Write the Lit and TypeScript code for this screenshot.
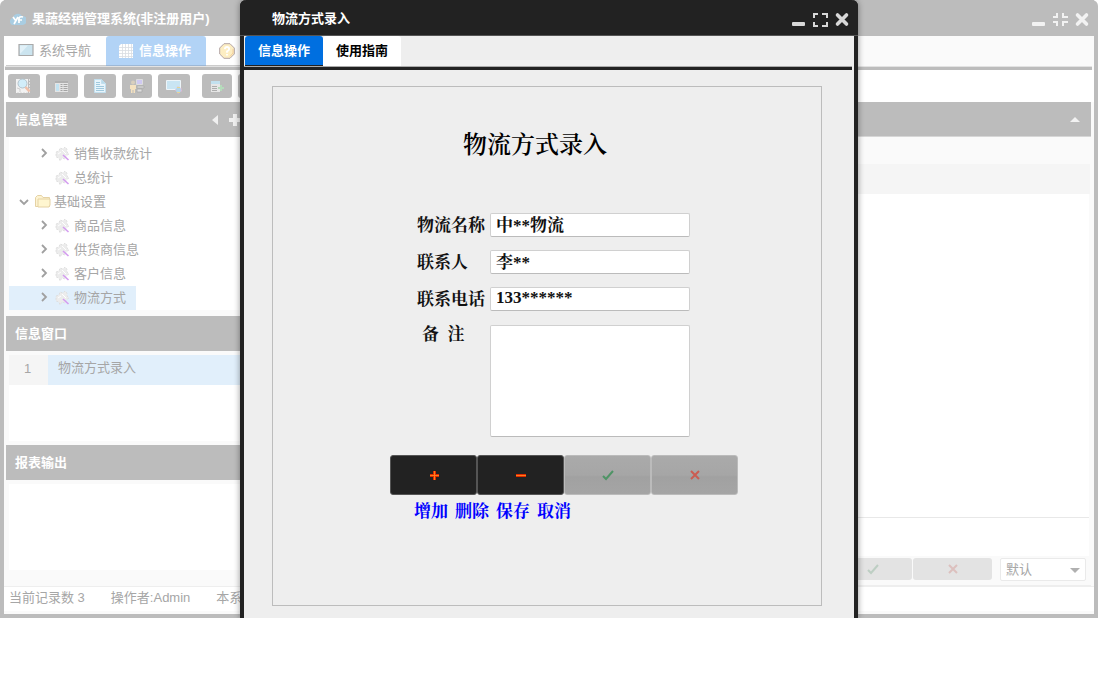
import { LitElement, html, css, svg } from "lit";
import { customElement } from "lit/decorators.js";
import { classMap } from "lit/directives/class-map.js";

const icons: Record<string, unknown> = {
  search: svg`<path d="M0 1h12v14H0z" fill="#f2f2f2"/><path d="M13.500 1v14M1 14.500h13" stroke="#e4e4e4" stroke-dasharray="2 1"/><path d="M1 10l3 1v3" fill="none" stroke="#cfcfcf"/><circle cx="6.500" cy="5.500" r="4.500" fill="#d2edf9" stroke="#b3c3cc"/><path d="M9.500 9l4 4.500" stroke="#efbfa9" stroke-width="2.600"/>`,
  form: svg`<path d="M1 3h13v11H1z" fill="#e4e4e4"/><path d="M1 3h13v2H1z" fill="#b0b0b0"/><path d="M2 6h3v7H2z" fill="#c2e3f2"/><path d="M6.500 6.500h2M6.500 8.500h2M6.500 10.500h2M6.500 12.500h2M9.500 6.500h4M9.500 8.500h4M9.500 10.500h4M9.500 12.500h4" stroke="#a4a4a4"/>`,
  page: svg`<path d="M2.500 1.500h7l4 4v9h-11z" fill="#e8f5fc" stroke="#c2dfee"/><path d="M9.500 1.500v4h4" fill="#b9dcec" stroke="#c2dfee"/><path d="M4 4.500h4M4 6.500h4M4 8.500h8M4 10.500h8M4 12.500h8" stroke="#9fc9de"/>`,
  user: svg`<path d="M7.500 1.500h6v5h-6z" fill="#cfc9f2" stroke="#ddd"/><path d="M8 8h7v2H8zM8 11h5v3H8z" fill="#dedede" stroke="#a8a8a8" stroke-width=".8"/><circle cx="4" cy="4.500" r="2" fill="#d9cfbd"/><path d="M1 7h6v4H6v4H4.500v-3H3.500v3H2v-4H1z" fill="#f5e2c0"/>`,
  screen: svg`<path d="M.500 2.500h14v9H.500z" fill="#c9e5f3" stroke="#edf5f9"/><circle cx="12.500" cy="12" r="2.600" fill="#b4d6ea"/><circle cx="12.500" cy="12" r="3" fill="none" stroke="#e0b8d8" stroke-dasharray="2 2"/><path d="M11 9.500h3M11 14.500h3" stroke="#e5d596"/>`,
  add: svg`<path d="M2 3h9v11H2z" fill="#e6e6e6"/><path d="M2 3h9v3H2z" fill="#c2e0ee"/><path d="M3 8.500h5M3 10.500h5M3 12.500h5" stroke="#adadad"/><path d="M12 7v6M9 10h6" stroke="#b5dcbb" stroke-width="2"/>`,
  monitor: svg`<path d="M1 1.500h14v11H1z" fill="#cbe4ef" stroke="#a9a9a9" stroke-width="1.200"/><path d="M2 2.500h8L2 11z" fill="#e2f1f8"/>`,
  gridIcon: svg`<path d="M3 1h12v14H1V3z" fill="#fff"/><path d="M4.500 1v14M7.500 1v14M10.500 1v14M13.500 1v14M1 4.500h14M1 7.500h14M1 10.500h14M1 13.500h14" stroke="#d9dde2" stroke-width=".8"/>`,
  help: svg`<path d="M5 .700h6l4.300 4.300v6L11 15.300H5L.700 11V5z" fill="#fdeec3" stroke="#b3a4a4"/><path d="M11 13.500L14 10V6" fill="none" stroke="#f4cf9a"/><path d="M5.800 6.200Q6 4 8 4t2.200 2Q10.200 7.500 8 8.400V9.800M8 11v1.500" fill="none" stroke="#fff" stroke-width="1.800"/>`,
  tool: svg`<path d="M1 6l3-1 1-3 3 1 2-2 2 2v3l2 2-3 2-1 3-3-1-2 3-1-3-3-1z" fill="#ececec" stroke="#dadada" stroke-dasharray="2 1.500" stroke-width=".8"/><path d="M3 8l3-2M7 4l4 4" stroke="#fff"/><path d="M8 9l5.500 5" stroke="#d49cf0" stroke-width="1.600"/>`,
  folder: svg`<path d="M.500 12.500v-9l2-2h4l1.500 2h6.500v9z" fill="#fdf3d2" stroke="#e5d2a4"/><path d="M3 12V5h12v6l-1 2H3z" fill="#fff6d0" stroke="#e5d2a4"/>`,
  logo: svg`<path d="M4 14a3.500 3.500 0 0 1-1-7 5 5 0 0 1 9-2 4 4 0 0 1 1 9z" fill="#a9cde2"/><path d="M3 6l3 4M8 6l-4 7M9 12V8q0-3 4-2M8 9h4" stroke="#fff" stroke-width="1.700" fill="none"/>`,
  min: svg`<rect x="2" y="11" width="13" height="4" rx="1"/>`,
  max: svg`<path d="M1 2h5v2H3v3H1zM10 2h6v5h-2V4h-4zM1 11h2v3h3v2H1zM14 11h2v5h-6v-2h4z"/>`,
  restore: svg`<path d="M4 2h2v5H1V5h3zM10 2h2v3h4v2h-6zM1 10h5v5H4v-3H1zM10 10h6v2h-4v3h-2z"/>`,
  close: svg`<path d="M3.500 4l9 9M12.500 4l-9 9" stroke="currentColor" stroke-width="3.600" stroke-linecap="round"/>`,
  right: svg`<path d="M6 3l4 4-4 4" fill="none" stroke="#a0a0a0" stroke-width="1.800"/>`,
  down: svg`<path d="M4 6l4 4 4-4" fill="none" stroke="#a0a0a0" stroke-width="1.800"/>`,
  left: svg`<path d="M11 3v10L5 8z"/>`,
  plusWhite: svg`<path d="M6 2h4v4h4v4h-4v4H6v-4H2V6h4z"/>`,
  up: svg`<path d="M3 11h10L8 6z"/>`,
  arrow: svg`<path d="M3 6h10l-5 5z" fill="#b0b0b0"/>`,
  plus: svg`<path d="M8.500 4v9M4 8.500h9" stroke="#e02a00" stroke-width="3"/><path d="M8.500 4v9M4 8.500h9" stroke="#ff7e1a"/>`,
  minus: svg`<path d="M3 8.500h10" stroke="#e02a00" stroke-width="3"/><path d="M3 8.500h10" stroke="#ff7e1a"/>`,
  check: svg`<path d="M3 9l3 3 7-8" fill="none" stroke="#4f9466" stroke-width="2"/>`,
  cross: svg`<path d="M4 4l8 8M12 4l-8 8" stroke="#cb5d52" stroke-width="2"/>`,
};

const icon = (name: string) =>
  html`<svg class="icon" viewBox="0 0 16 16" fill="currentColor" aria-hidden="true">${icons[name]}</svg>`;

const base = css`
  *, *::before, *::after { box-sizing: border-box; }
  button, input, textarea, select { font: inherit; color: inherit; margin: 0; padding: 0; border: 0; background: none; }
  .icon { width: 16px; height: 16px; display: block; flex: none; }
  .bar { display: flex; align-items: center; height: 36px; padding: 2px 4px 0 12px; }
  .bar-title { flex: 1; margin: 0; font-size: 13px; line-height: 20px; font-weight: 700; color: #fff; }
  .controls { display: flex; gap: 6px; }
  .tabs { display: flex; height: 30px; }
  .tab { display: flex; align-items: center; justify-content: center; gap: 5px; border-radius: 3px 3px 0 0; background: #fff; }
`;

@customElement("logistics-dialog")
export class LogisticsDialog extends LitElement {
  static styles = [
    base,
    css`
      :host { display: flex; flex-direction: column; background: #eee; border: solid #222; border-width: 0 4px; border-radius: 6px 6px 0 0; box-shadow: 0 0 6px rgba(0, 0, 0, 0.4); clip-path: inset(0 -10px 0 -10px); }
      .bar { background: #222; margin: 0 -4px; padding-left: 32px; padding-right: 8px; border-radius: 6px 6px 0 0; color: #d8d8d8; border-bottom: 1px solid #555; }
      .tab { width: 78px; font-weight: 700; color: #000; }
      .tab.active { background: #006fe0; color: #fff; border-bottom: 1px solid #222; }
      .tabs { padding-left: 1px; }
      .rule { height: 4px; margin-right: 2px; background: #222; border-top: 1px solid #aaa; }
      .sheet { flex: 1; margin: 16px 32px 12px 28px; border: 1px solid #bcbcbc; font-family: "Liberation Serif", "Noto Serif CJK SC", "Noto Sans CJK SC", serif; }
      .title { margin: 0; padding: 42px 24px 0 0; font-size: 24px; line-height: 32px; font-weight: 600; text-align: center; color: #000; }
      .form { width: 382px; margin: 52px auto 0; padding-left: 34px; font-size: 17px; font-weight: 700; color: #111; }
      .fields { display: grid; grid-template-columns: 67px 200px; gap: 13px 6px; padding-left: 27px; }
      .fields label { height: 24px; line-height: 26px; white-space: nowrap; }
      .fields .note { padding-left: 5px; line-height: 22px; }
      .box { width: 100%; height: 24px; padding: 0 6px 3px 5px; background: #fff; border: 1px solid #d0d0d0; border-radius: 2px; border-bottom-color: #bbb; }
      .area { height: 112px; resize: none; display: block; margin-top: 1px; padding: 4px 6px; }
      .actions { display: grid; grid-template-columns: repeat(4, 1fr); margin-top: 18px; }
      .action { display: grid; place-items: center; height: 40px; background: #222; border: 1px solid #555; border-radius: 3px; }
      .action.disabled { background: linear-gradient(#aaa, #a6a6a6 50%, #a1a1a1 55%, #a5a5a5); border-color: #bbb; }
      .links { display: flex; gap: 7px; margin-top: 5px; padding-left: 24px; }
      .links a { color: #00f; text-decoration: none; line-height: 24px; }
    `,
  ];

  private fields = [
    { id: "name", label: "物流名称", value: "中**物流" },
    { id: "contact", label: "联系人", value: "李**" },
    { id: "phone", label: "联系电话", value: "133******" },
  ];

  private actions = [
    { label: "增加", icon: "plus", disabled: false },
    { label: "删除", icon: "minus", disabled: false },
    { label: "保存", icon: "check", disabled: true },
    { label: "取消", icon: "cross", disabled: true },
  ];

  render() {
    return html`
      <header class="bar">
        <h2 class="bar-title">物流方式录入</h2>
        <div class="controls">
          <button aria-label="最小化">${icon("min")}</button>
          <button aria-label="最大化">${icon("max")}</button>
          <button aria-label="关闭">${icon("close")}</button>
        </div>
      </header>
      <nav class="tabs">
        <button class="tab active">信息操作</button>
        <button class="tab">使用指南</button>
      </nav>
      <div class="rule"></div>
      <section class="sheet">
        <h1 class="title">物流方式录入</h1>
        <form class="form" @submit=${(e: Event) => e.preventDefault()}>
          <div class="fields">
            ${this.fields.map(
              (f) => html`<label for=${f.id}>${f.label}</label><input class="box" id=${f.id} .value=${f.value} />`
            )}
            <label class="note" for="note">备&ensp;注</label>
            <textarea class="box area" id="note"></textarea>
          </div>
          <div class="actions">
            ${this.actions.map(
              (a) => html`<button
                type="button"
                class=${classMap({ action: true, disabled: a.disabled })}
                ?disabled=${a.disabled}
                aria-label=${a.label}
              >${icon(a.icon)}</button>`
            )}
          </div>
          <div class="links">${this.actions.map((a) => html`<a href="#">${a.label}</a>`)}</div>
        </form>
      </section>
    `;
  }
}

@customElement("app-root")
export class AppRoot extends LitElement {
  static styles = [
    base,
    css`
      :host { display: block; font-family: "Liberation Sans", "Noto Sans CJK SC", sans-serif; font-size: 13px; line-height: 20px; color: #a6a6a6; }
      .window { position: relative; margin-right: 1px; background: #fafafa; border: solid #bcbcbc; border-width: 0 4px 4px; border-radius: 6px 6px 0 0; }
      .bar { background: #bcbcbc; color: #f2f2f2; gap: 6px; padding-left: 6px; }
      .tabs { padding-left: 2px; background: linear-gradient(90deg, #fff 260px, #fafafa 260px); }
      .tab { width: 100px; padding-right: 3px; border-bottom: 1px solid #ccc; }
      .tab.active { background: #b2d3f6; color: #fff; font-weight: 700; border-bottom-color: #9db8d6; }
      .tab.guide { width: 120px; justify-content: flex-start; padding-left: 13px; }
      .rule { height: 4px; margin: 0 2px 0 1px; background: #bcbcbc; border-top: 1px solid #e2e2e2; }
      .tools { display: flex; gap: 6px; height: 32px; padding: 4px 4px 0; background: #fff; }
      .tool { display: grid; place-items: center; width: 32px; height: 24px; background: #bcbcbc; border-radius: 3px; }
      .tool.narrow { width: 30px; }
      .tool.apart { margin-left: 6px; }
      .body { display: grid; grid-template-columns: 260px 1fr; margin: 0 3px 0 2px; }
      .head { display: flex; align-items: center; height: 35px; padding: 0 9px; margin: 0; background: #bcbcbc; color: #fff; font-size: 13px; font-weight: 700; }
      .head-title { flex: 1; }
      .side-tools { display: flex; gap: 4px; padding-right: 14px; color: #f0f0f0; }
      .tree { list-style: none; margin: 0 0 6px 3px; padding: 5px 0 0; background: #fff; }
      .node { display: flex; align-items: center; height: 24px; gap: 3px; width: max-content; padding: 0 10px 0 27px; }
      .node.leaf { padding-left: 46px; }
      .node.parent { padding-left: 7px; gap: 3px; }
      .node.selected { background: #e1effb; }
      .pane { height: 86px; margin: 4px 0 4px 3px; background: #fff; }
      .pane.last { margin-bottom: 16px; }
      .entries { width: 100%; border-collapse: collapse; line-height: 20px; }
      .entries td { height: 30px; padding: 0 10px 4px; background: #e1effb; }
      .entries .num { width: 39px; background: #f5f5f5; text-align: center; padding: 0 2px 2px 0; }
      .main { display: flex; flex-direction: column; }
      .main .head { justify-content: flex-end; padding: 0 8px; color: #f2f2f2; border-bottom: 1px solid #d6d6d6; }
      .filter { height: 27px; }
      .columns { height: 30px; background: #f5f5f5; margin-right: 1px; }
      .grid { flex: 1; background: #fff; border-bottom: 1px solid #e8e8e8; margin-right: 2px; }
      .summary { height: 38px; background: #fff; margin-right: 2px; }
      .pager { display: flex; justify-content: flex-end; align-items: flex-start; gap: 1px; height: 30px; padding: 2px 5px 0 0; border-bottom: 1px solid #eee; }
      .act { display: grid; place-items: center; width: 79px; height: 22px; background: #e3e3e3; border-radius: 3px; }
      .act .icon { opacity: 0.25; }
      .picker { position: relative; display: block; width: 86px; margin-left: 7px; }
      .picker select { appearance: none; width: 100%; height: 23px; padding: 0 5px; background: #fff; border: 1px solid #eaeaea; border-radius: 2px; }
      .picker .icon { position: absolute; right: 3px; top: 4px; pointer-events: none; }
      .status { display: flex; gap: 26px; height: 25px; padding: 1px 5px 0; margin-bottom: 3px; background: #fff; font-size: 13px; border-top: 1px solid #eee; }
      .dialog { position: absolute; left: 236px; right: 236px; top: 0; bottom: -4px; }
    `,
  ];

  private tools = [
    { icon: "search", label: "查询", cls: "" },
    { icon: "form", label: "表单", cls: "" },
    { icon: "page", label: "文档", cls: "" },
    { icon: "user", label: "用户", cls: "narrow" },
    { icon: "screen", label: "显示", cls: "" },
    { icon: "add", label: "新增", cls: "narrow apart" },
    { icon: "page", label: "报表", cls: "" },
  ];

  private tree = [
    { label: "销售收款统计", kind: "branch" },
    { label: "总统计", kind: "leaf" },
    { label: "基础设置", kind: "parent" },
    { label: "商品信息", kind: "branch" },
    { label: "供货商信息", kind: "branch" },
    { label: "客户信息", kind: "branch" },
    { label: "物流方式", kind: "branch", selected: true },
  ];

  private node(n: { label: string; kind: string; selected?: boolean }) {
    const cls = classMap({ node: true, leaf: n.kind === "leaf", parent: n.kind === "parent", selected: !!n.selected });
    const arrow = n.kind === "leaf" ? "" : icon(n.kind === "parent" ? "down" : "right");
    return html`<li><button class=${cls}>${arrow}${icon(n.kind === "parent" ? "folder" : "tool")}<span>${n.label}</span></button></li>`;
  }

  render() {
    return html`
      <div class="window">
        <header class="bar">
          ${icon("logo")}
          <h1 class="bar-title">果蔬经销管理系统(非注册用户)</h1>
          <div class="controls">
            <button aria-label="最小化">${icon("min")}</button>
            <button aria-label="还原">${icon("restore")}</button>
            <button aria-label="关闭">${icon("close")}</button>
          </div>
        </header>
        <nav class="tabs">
          <button class="tab">${icon("monitor")}系统导航</button>
          <button class="tab active">${icon("gridIcon")}信息操作</button>
          <button class="tab guide" aria-label="使用指南">${icon("help")}</button>
        </nav>
        <div class="rule"></div>
        <div class="tools">
          ${this.tools.map((t) => html`<button class="tool ${t.cls}" aria-label=${t.label}>${icon(t.icon)}</button>`)}
        </div>
        <div class="body">
          <aside>
            <h2 class="head">
              <span class="head-title">信息管理</span>
              <span class="side-tools">
                <button aria-label="收起">${icon("left")}</button>
                <button aria-label="添加">${icon("plusWhite")}</button>
              </span>
            </h2>
            <ul class="tree">${this.tree.map((n) => this.node(n))}</ul>
            <h2 class="head">信息窗口</h2>
            <div class="pane">
              <table class="entries"><tbody><tr><td class="num">1</td><td>物流方式录入</td></tr></tbody></table>
            </div>
            <h2 class="head">报表输出</h2>
            <div class="pane last"></div>
          </aside>
          <main class="main">
            <div class="head"><button aria-label="折叠">${icon("up")}</button></div>
            <div class="filter"></div>
            <div class="columns"></div>
            <div class="grid"></div>
            <div class="summary"></div>
            <div class="pager">
              <button class="act" aria-label="保存">${icon("check")}</button>
              <button class="act" aria-label="取消">${icon("cross")}</button>
              <label class="picker">
                <select aria-label="样式"><option>默认</option></select>
                ${icon("arrow")}
              </label>
            </div>
          </main>
        </div>
        <footer class="status">
          <span>当前记录数 3</span>
          <span>操作者:Admin</span>
          <span>本系统</span>
        </footer>
        <logistics-dialog class="dialog"></logistics-dialog>
      </div>
    `;
  }
}
